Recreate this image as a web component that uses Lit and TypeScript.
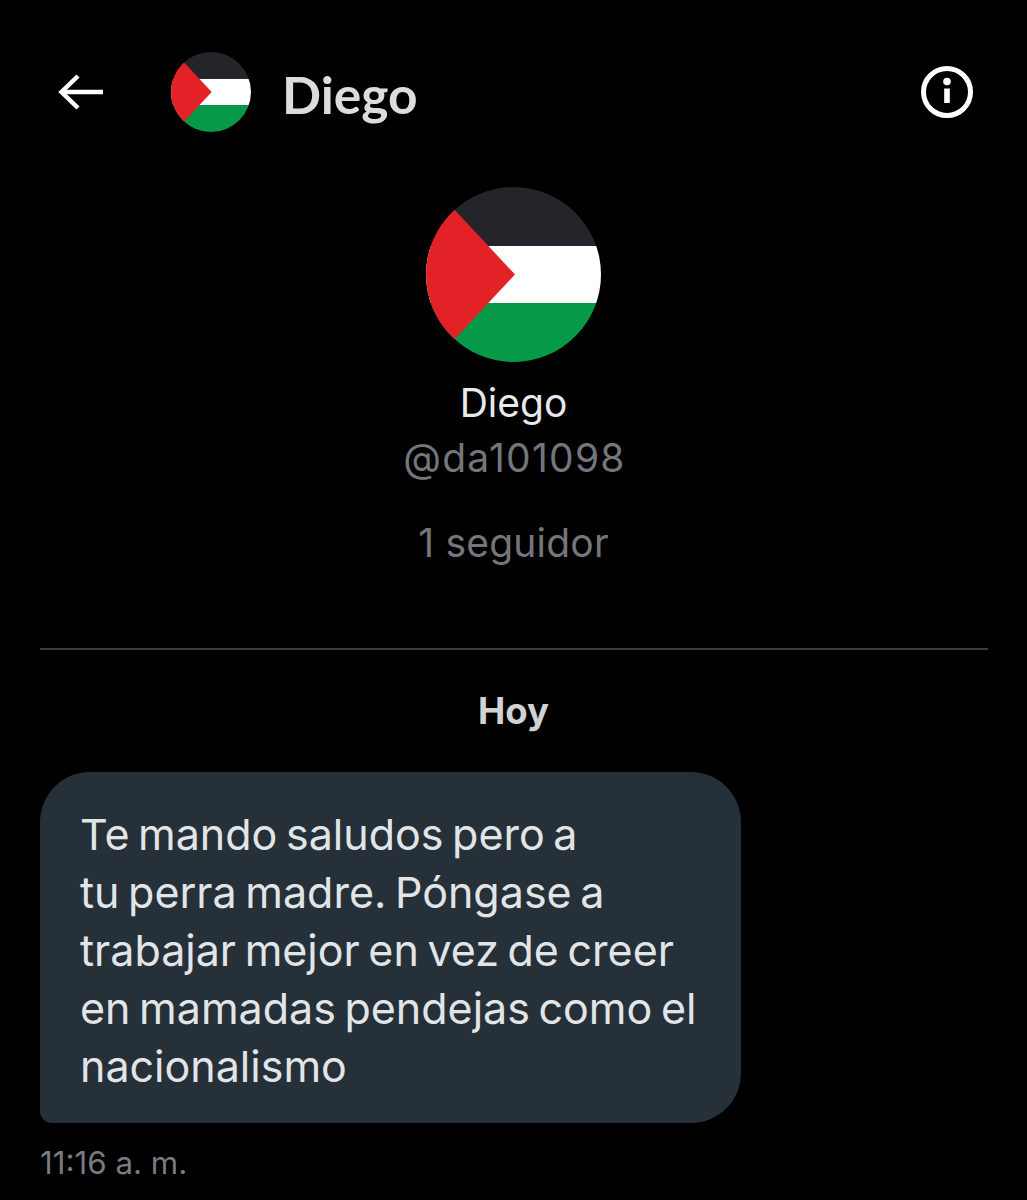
import {css, html, LitElement} from "lit";
import {customElement} from "lit/decorators.js";

const flag = (size: number) => html`
	<svg class="flag" width=${size} height=${size} viewBox="0 0 175 175">
		<defs>
			<clipPath id="round-${size}"><circle cx="87.5" cy="87.5" r="87.5"></circle></clipPath>
		</defs>
		<g clip-path="url(#round-${size})">
			<rect width="175" height="59" fill="#24242a"></rect>
			<rect y="59" width="175" height="57" fill="#ffffff"></rect>
			<rect y="116" width="175" height="59" fill="#069a48"></rect>
			<path d="M-2 -10 L89 87.5 L-2 185 Z" fill="#e32227"></path>
		</g>
	</svg>
`;

@customElement("app-root")
export default class AppRoot extends LitElement {
	static styles = css`
		:host {
			display: block;
			width: 1027px;
			height: 1200px;
			overflow: hidden;
			background: #000;
			color: #e7e9ea;
			font-family: "Inter", "Roboto", sans-serif;
			box-sizing: border-box;
		}

		.flag {
			display: block;
			flex: none;
		}

		header {
			display: flex;
			align-items: center;
			height: 80px;
			padding: 52px 54px 0 58px;
		}

		.back {
			display: block;
			flex: none;
			margin: 0 68px 0 0;
		}

		.title {
			margin-left: 31px;
			font: 700 51.5px/80px "Lato", sans-serif;
			color: #dcdcdc;
			flex: 1;
			position: relative;
			top: 2px;
		}

		.profile {
			display: flex;
			flex-direction: column;
			align-items: center;
			padding-top: 55px;
		}

		.name {
			margin-top: 17px;
			font-size: 39px;
			line-height: 48px;
		}

		.handle, .followers {
			font-size: 39px;
			line-height: 48px;
			color: #73777c;
		}

		.handle {
			margin: 7px 0 0 2px;
			letter-spacing: 1.25px;
		}

		.followers {
			margin-top: 37px;
			letter-spacing: 0.2px;
		}

		hr {
			margin: 81px 39px 0 40px;
			border: 0;
			height: 2px;
			background: #3a3d42;
		}

		.day {
			margin-top: 39px;
			text-align: center;
			font-weight: 700;
			font-size: 36.5px;
			line-height: 44px;
			color: #d0d2d4;
		}

		.bubble {
			margin: 39px 0 0 40px;
			width: 701px;
			height: 351px;
			box-sizing: border-box;
			padding: 33px 20px 0 40px;
			background: #263038;
			border-radius: 50px 50px 50px 12px;
			font-size: 43px;
			line-height: 58px;
			word-spacing: -3.5px;
			color: #e1e5e8;
		}

		.bubble div {
			white-space: nowrap;
		}

		.time {
			margin: 20px 0 0 40px;
			font-size: 31.3px;
			line-height: 40px;
			color: #797c81;
		}
	`;

	render() {
		return html`
			<header>
				<svg class="back" width="45" height="36" viewBox="0 0 45 36" fill="none" stroke="#fff" stroke-width="4.5">
					<path d="M45 18 H4"></path>
					<path d="M20 2 L3.5 18 L20 34"></path>
				</svg>
				${flag(80)}
				<div class="title">Diego</div>
				<svg width="52" height="52" viewBox="0 0 52 52">
					<circle cx="26" cy="26" r="23.5" fill="none" stroke="#fff" stroke-width="5"></circle>
					<circle cx="26" cy="15.5" r="3.8" fill="#fff"></circle>
					<rect x="23.2" y="22.5" width="5.6" height="14.5" fill="#fff"></rect>
				</svg>
			</header>
			<section class="profile">
				${flag(175)}
				<div class="name">Diego</div>
				<div class="handle">@da101098</div>
				<div class="followers">1 seguidor</div>
			</section>
			<hr />
			<div class="day">Hoy</div>
			<div class="bubble">
				<div>Te mando saludos pero a</div>
				<div>tu perra madre. Póngase a</div>
				<div>trabajar mejor en vez de creer</div>
				<div>en mamadas pendejas como el</div>
				<div>nacionalismo</div>
			</div>
			<div class="time">11:16 a. m.</div>
		`;
	}
}

declare global {
	interface HTMLElementTagNameMap {
		"app-root": AppRoot;
	}
}
